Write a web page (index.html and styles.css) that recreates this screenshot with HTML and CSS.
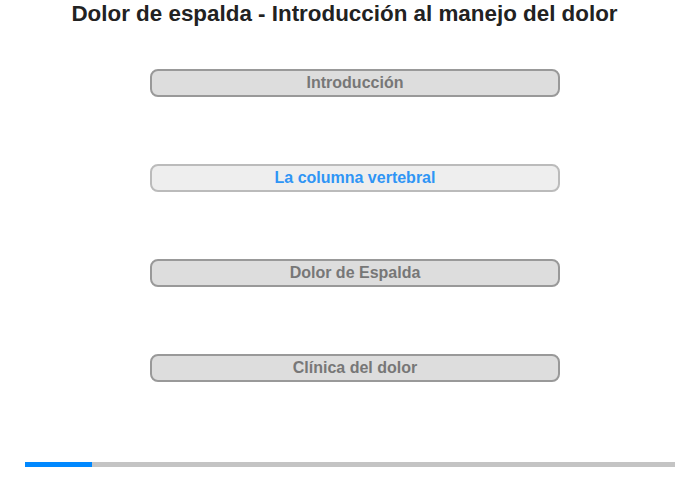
FILE: index.html
```html
<!DOCTYPE html>
<html lang="es">
<head>
<meta charset="utf-8">
<title>Dolor de espalda</title>
<link rel="stylesheet" href="styles.css">
</head>
<body>
<div class="page">
  <h1 class="title">Dolor de espalda - Introducción al manejo del dolor</h1>
  <nav class="menu">
    <div class="item">Introducción</div>
    <div class="item active">La columna vertebral</div>
    <div class="item">Dolor de Espalda</div>
    <div class="item">Clínica del dolor</div>
  </nav>
  <div class="progress"><div class="progress-fill" style="width:67px"></div></div>
</div>
</body>
</html>
```
FILE: styles.css
```css
html, body {
  margin: 0;
  padding: 0;
  background: #fff;
}
.page {
  width: 700px;
  height: 480px;
  display: flex;
  flex-direction: column;
  font-family: "Liberation Sans", Arial, sans-serif;
}
.title {
  margin: 0;
  padding-top: 1px;
  height: 31px;
  font-size: 22.4px;
  line-height: 26px;
  font-weight: bold;
  color: #222;
  text-align: center;
  padding-right: 11px;
}
.menu {
  display: flex;
  flex-direction: column;
  gap: 67px;
  margin-top: 37px;
  margin-left: 150px;
  width: 410px;
}
.item {
  box-sizing: border-box;
  height: 28px;
  border: 2px solid #999;
  border-radius: 8px;
  background: #ddd;
  color: #777;
  font-size: 16px;
  font-weight: bold;
  line-height: 24px;
  text-align: center;
}
.item.active {
  background: #eee;
  border-color: #bbb;
  color: #2f95f5;
}
.progress {
  margin-top: 80px;
  margin-left: 25px;
  width: 650px;
  height: 5px;
  background: #c4c4c4;
}
.progress-fill {
  height: 100%;
  background: #0088ff;
}
```
